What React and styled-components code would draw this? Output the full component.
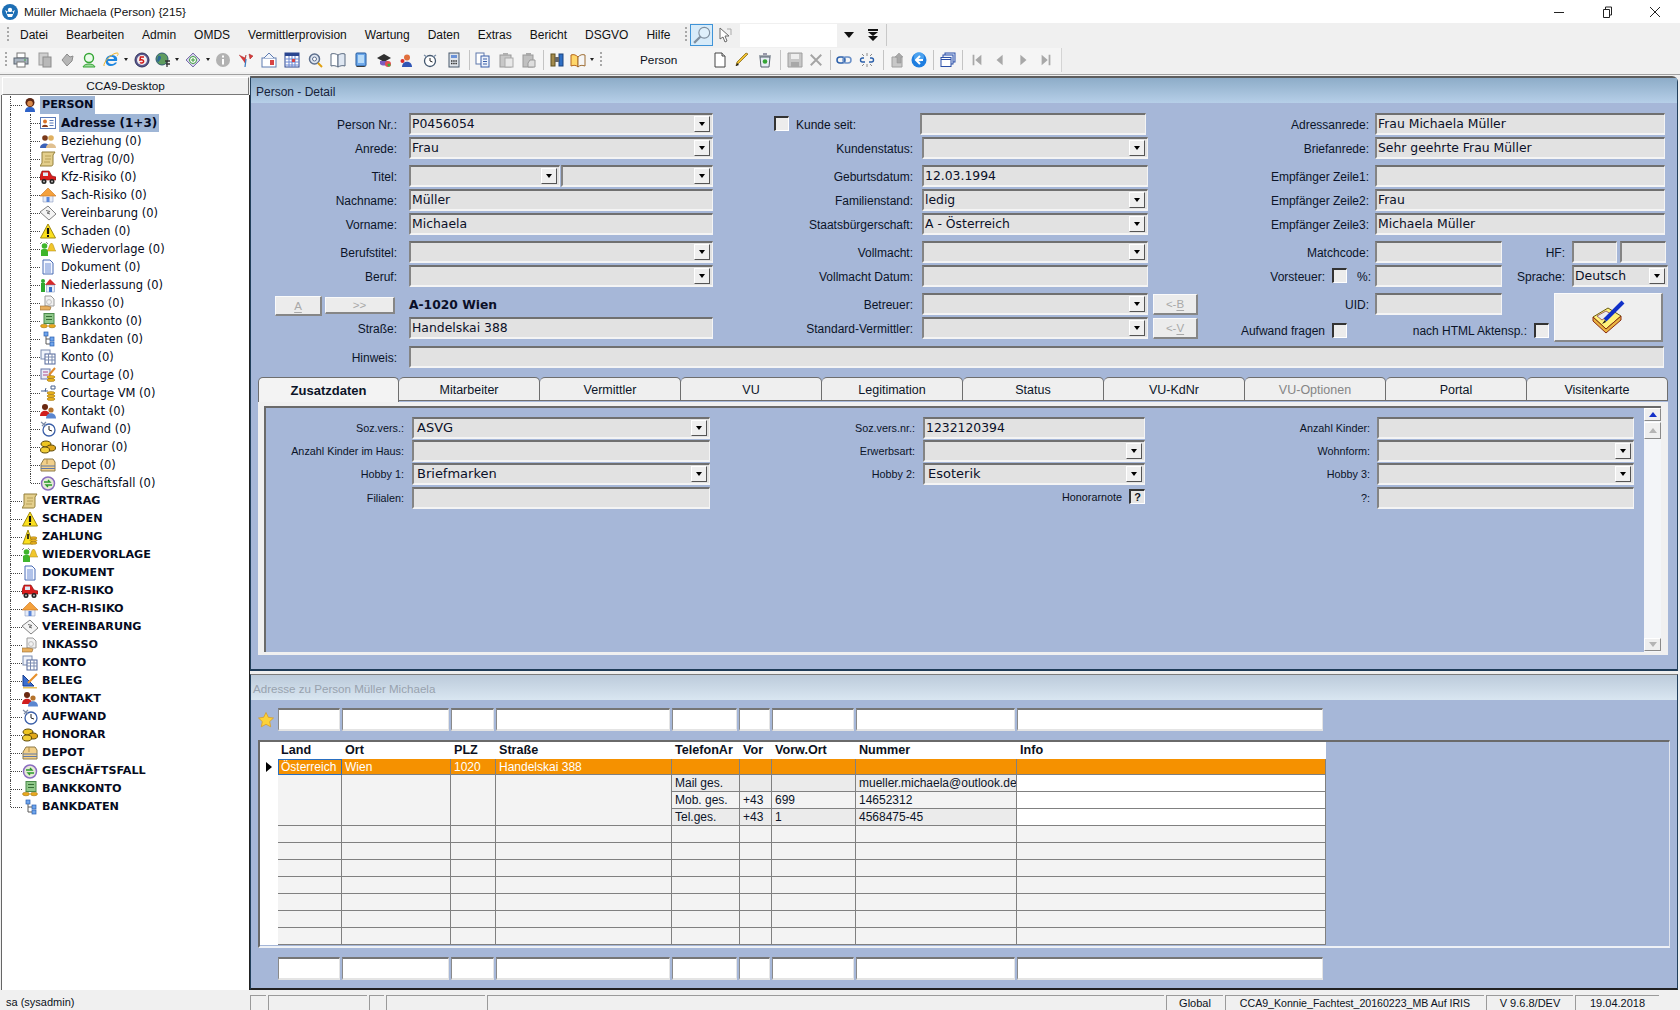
import React from "react";
import styled, { createGlobalStyle } from "styled-components";

const Global = createGlobalStyle`
  html, body { margin: 0; padding: 0; background: #fff; overflow: hidden; }
  body { font-family: "Liberation Sans", Arial, sans-serif; font-size: 12px; color: #0b1020; }
  * { box-sizing: border-box; }
`;

const Shell = styled.div`width:1680px;height:1010px;display:flex;flex-direction:column;background:#f0f0f0;overflow:hidden;`;

/* ---------- icons ---------- */
const P = {
  person: <><path d="M3 15c0-4 2-5 5-5s5 1 5 5z" fill="#2d62c8"/><circle cx="8" cy="5.500" r="4.500" fill="#5a2412"/><circle cx="8" cy="6.500" r="2.800" fill="#d98a4a"/></>,
  card: <><rect x=".5" y="2.500" width="15" height="11" fill="#fff" stroke="#5a7ab8"/><circle cx="5" cy="6.500" r="2" fill="#d9722a"/><path d="M2 12c0-3 6-3 6 0z" fill="#8a3a1a"/><path d="M9.500 5.500h4M9.500 8h4M9.500 10.500h4" stroke="#5a7ab8"/></>,
  rel: <><circle cx="5" cy="5" r="2.800" fill="#7a3a1a"/><path d="M0 15c0-6 10-6 10 0z" fill="#3a62b8"/><circle cx="11" cy="5" r="2.800" fill="#e0b060"/><path d="M6 15c0-6 10-6 10 0z" fill="#e0c090"/></>,
  scroll: <><path d="M2 1h13l-2 3v9c0 1.500-1 2-2 2H0l2-3V4z" fill="#e4cf8c" stroke="#94803c"/><path d="M5 5h6M5 8h6M4 11h6" stroke="#b8a058"/></>,
  car: <><path d="M0 11V7l2-5h7l3 5 4 1v3z" fill="#d81e1e" stroke="#801010" strokeWidth=".6"/><rect x="3" y="3.500" width="5" height="3.500" fill="#dfe8f4"/><circle cx="4" cy="12.500" r="2.500" fill="#222"/><circle cx="12" cy="12.500" r="2.500" fill="#222"/><circle cx="4" cy="12.500" r="1" fill="#bbb"/><circle cx="12" cy="12.500" r="1" fill="#bbb"/></>,
  house: <><path d="M3 8h10v7H3z" fill="#e6ecf8" stroke="#8a9cc0" strokeWidth=".6"/><path d="M0 9 8 1l8 8z" fill="#f4a13c" stroke="#c8701c" strokeWidth=".6"/><rect x="6.500" y="10" width="3" height="5" fill="#5a86d8"/></>,
  deal: <><path d="M0 7 8 1l8 8-7 6z" fill="#f4f4f4" stroke="#808080"/><path d="M6 5.500l4 1-3 1.500 3 1" stroke="#707070" fill="none"/></>,
  warn: <><path d="M8 1 .5 15h15z" fill="#fbe01e" stroke="#a08a10"/><path d="M8 5v6" stroke="#111" strokeWidth="2.200"/><rect x="7" y="12" width="2" height="2" fill="#111"/></>,
  remind: <><circle cx="4.500" cy="5" r="2.800" fill="#3fb52c"/><path d="M1 15V9c0-1.500 7-1.500 7 0v6z" fill="#3fb52c"/><path d="M7 10c2-1 2-7 4.500-8 2.500 1 2.500 7 4.500 8z" fill="#f1c62c" stroke="#a88510" strokeWidth=".5"/><path d="M0 3l2-2M8 3 6 1" stroke="#888"/></>,
  doc: <><path d="M3 1h7l3 3v11H3z" fill="#f4f7ff" stroke="#4a6cb4"/><path d="M5 5h6M5 7h6M5 9h6M5 11h6M5 13h6" stroke="#6f8ed4"/></>,
  branch: <><rect x="1" y="6" width="4" height="9" fill="#2fa82f"/><circle cx="3" cy="4" r="2" fill="#2fa82f"/><path d="M5 8l5-6 6 6z" fill="#d62a2a"/><rect x="6.500" y="8" width="8" height="7" fill="#e8eef8" stroke="#6d86b8" strokeWidth=".5"/><rect x="9" y="10" width="3" height="5" fill="#3a6fc8"/></>,
  cash: <><path d="M5 1h6l3 3v7H5z" fill="#f2f2f2" stroke="#9a9a9a"/><circle cx="9" cy="7" r="2.400" fill="none" stroke="#c0c0c0"/><path d="M0 11h7l4 1-1 3H0z" fill="#e8b060" stroke="#96682c" strokeWidth=".6"/></>,
  bank: <><rect x="4" y="0.500" width="10" height="10" fill="#8fc88a" stroke="#4a8a4a"/><path d="M6 3.500h6M6 6.500h6" stroke="#356f35"/><ellipse cx="4" cy="13" rx="3.500" ry="1.800" fill="#e8a81e" stroke="#946808" strokeWidth=".5"/><ellipse cx="12" cy="13" rx="3.500" ry="1.800" fill="#e8a81e" stroke="#946808" strokeWidth=".5"/></>,
  tree: <><rect x="4" y="1" width="4" height="4" fill="#6ea4ec" stroke="#2a5fb0" strokeWidth=".7"/><rect x="10" y="6" width="4" height="4" fill="#6ea4ec" stroke="#2a5fb0" strokeWidth=".7"/><rect x="10" y="11" width="4" height="4" fill="#6ea4ec" stroke="#2a5fb0" strokeWidth=".7"/><path d="M6 5v8h4M6 8h4" stroke="#5a5a5a" fill="none"/></>,
  konto: <><rect x="1" y="1" width="9" height="9" fill="#eef2fa" stroke="#7b8bb0"/><rect x="5" y="5" width="10" height="10" fill="#fff" stroke="#52669a"/><path d="M5 8h10M5 11h10M8.500 5v10M12 5v10" stroke="#7b8bb0"/></>,
  court: <><rect x="1" y="2" width="9" height="10" fill="#e9edf8" stroke="#6677a8"/><path d="M3 5h5M3 8h5" stroke="#b04a8a"/><path d="M15 1 9 8" stroke="#e08a2c" strokeWidth="2"/><ellipse cx="11" cy="10" rx="4" ry="1.500" fill="#e8b21e" stroke="#946808" strokeWidth=".5"/><ellipse cx="11" cy="13" rx="4" ry="1.500" fill="#e8b21e" stroke="#946808" strokeWidth=".5"/></>,
  courtvm: <><path d="M1 6h5M6 3l-1 3h3M11 1h4v3h-4z" stroke="#46608f" fill="none"/><ellipse cx="11" cy="8" rx="4" ry="1.500" fill="#e8b21e" stroke="#946808" strokeWidth=".5"/><ellipse cx="11" cy="11" rx="4" ry="1.500" fill="#e8b21e" stroke="#946808" strokeWidth=".5"/><ellipse cx="11" cy="14" rx="4" ry="1.500" fill="#e8b21e" stroke="#946808" strokeWidth=".5"/></>,
  contact: <><circle cx="5" cy="4" r="3" fill="#6a2810"/><path d="M0 13c0-7 10-7 10 0z" fill="#d01e1e"/><circle cx="11" cy="7" r="2.600" fill="#b5732c"/><path d="M6 15.500c0-7 10-7 10 0z" fill="#5a86d0"/></>,
  clock: <><circle cx="9" cy="9" r="6" fill="#fff" stroke="#3a5fa8" strokeWidth="1.300"/><path d="M9 5v4l3 1" stroke="#222" fill="none"/><path d="M1 1l5 4M6 1 2 5" stroke="#7d8ca8" strokeWidth="1.200"/></>,
  coins: <><ellipse cx="6" cy="5" rx="5" ry="3" fill="#eec51f" stroke="#5e4a08"/><ellipse cx="11" cy="9" rx="4.500" ry="3" fill="#e2a81a" stroke="#5e4a08"/><ellipse cx="5" cy="11" rx="4.500" ry="3" fill="#f2cf38" stroke="#5e4a08"/></>,
  depot: <><path d="M1 7l3-5h9l2 3v9H1z" fill="#f2d08a" stroke="#8d7a48"/><path d="M1 9h14M1 11.500h14" stroke="#5f78a8"/><path d="M7 2v5" stroke="#b08c48"/></>,
  case: <><circle cx="8" cy="8.500" r="6.500" fill="#e5e9d8" stroke="#8a6cc0" strokeWidth="1.500"/><path d="M4 7h6l-2-2M12 10H6l2 2" stroke="#2a9a2a" fill="none" strokeWidth="1.300"/></>,
  pay: <><path d="M6 1 .8 15h10z" fill="#fbe01e" stroke="#a08a10"/><path d="M6 5v5" stroke="#111" strokeWidth="1.600"/><ellipse cx="11.500" cy="9" rx="3.500" ry="1.300" fill="#e8b21e" stroke="#946808" strokeWidth=".5"/><ellipse cx="11.500" cy="11.500" rx="3.500" ry="1.300" fill="#e8b21e" stroke="#946808" strokeWidth=".5"/><ellipse cx="11.500" cy="14" rx="3.500" ry="1.300" fill="#e8b21e" stroke="#946808" strokeWidth=".5"/></>,
  beleg: <><path d="M1 2v11h11z" fill="#3b6fd0" stroke="#143c90"/><path d="M1 14h14v1.500H1z" fill="#e8c45c"/><path d="M15 1 6 10" stroke="#e8902c" strokeWidth="2.200"/></>,
  printer: <><rect x="4" y="1" width="8" height="5" fill="#fff" stroke="#777"/><rect x="1" y="6" width="14" height="6" fill="#a9b4c0" stroke="#59636e"/><rect x="4" y="10" width="8" height="5" fill="#fff" stroke="#777"/><path d="M11 8h2" stroke="#3aa33a"/></>,
  gdoc: <><rect x="2" y="1" width="9" height="12" fill="#cfcfcf" stroke="#9c9c9c"/><rect x="6" y="5" width="8" height="10" fill="#b8b8b8" stroke="#8c8c8c"/></>,
  gdocs: <><path d="M2 8l5-6 3 3 3-1-1 5-5 5z" fill="#b6b6b6" stroke="#8c8c8c"/></>,
  gmag: <><circle cx="8" cy="6" r="4.500" fill="#e9fbe9" stroke="#35a535" strokeWidth="1.400"/><path d="M2 15c1-4 11-4 12 0z" fill="#9edc9e" stroke="#35a535"/></>,
  ie: <><path d="M14 9H5c0 3.500 5 4 7 1.500h2C12 15 3 16 2.500 9c0-6 8-8 11-4 .8 1.300.8 2.500.5 4zM5 7h6c0-3-5.500-3-6 0z" fill="#1f86df"/><path d="M1 14C0 10 9 1 14 1c2 0 1 2 0 3" fill="none" stroke="#f0b429"/></>,
  five: <><circle cx="8" cy="8" r="7" fill="#5a5a90" stroke="#30305a"/><circle cx="8" cy="8" r="5" fill="#f5f0f0"/><path d="M10 5H6.500L6 8c3-1 4 1 3.500 2s-2.500 1.500-3.500.5" fill="none" stroke="#d01818" strokeWidth="1.500"/></>,
  globe: <><circle cx="7" cy="7" r="6" fill="#5f9c5f" stroke="#305a70"/><path d="M3 4c3-1 4 2 2 4s-1 3-3 1" fill="#2c6a96"/><path d="M10 9h5M11 12h4M12 9v6" stroke="#333" strokeWidth="1.300"/></>,
  cycle: <><path d="M8 1l7 7-7 7-7-7z" fill="#d6d2ea" stroke="#7a70ac"/><circle cx="8" cy="8" r="3.500" fill="#fff" stroke="#3a9a3a"/><path d="M6 8h4M8 6v4" stroke="#3a9a3a"/></>,
  info: <><circle cx="8" cy="8" r="7" fill="#b2b2b2"/><rect x="7" y="3.500" width="2" height="2" fill="#fff"/><rect x="7" y="7" width="2" height="5.500" fill="#fff"/></>,
  flag: <><path d="M1 3l6 3 1-3-1 8M11 2l4 2-3 3z" fill="#d83a3a" stroke="#a02020" strokeWidth=".5"/><path d="M8 7l-1 8" stroke="#3a7ac0" strokeWidth="1.300"/></>,
  cardup: <><rect x="1" y="6" width="14" height="9" fill="#fff" stroke="#5e7cb2"/><path d="M3 6l5-5 5 5" fill="#f0f4fb" stroke="#5e7cb2"/><rect x="9" y="8" width="4" height="5" fill="#d84444"/></>,
  cal: <><rect x="1" y="1" width="14" height="14" fill="#fff" stroke="#2a4690"/><rect x="1" y="1" width="14" height="3" fill="#2a4690"/><path d="M1 7h14M1 10h14M1 13h14M5 4v11M8 4v11M11 4v11" stroke="#6a86d0"/><rect x="8" y="7" width="3" height="3" fill="#d84444"/></>,
  gear: <><circle cx="7.500" cy="7" r="5" fill="#dfe6f1" stroke="#5d6f8d" strokeWidth="1.500"/><circle cx="7.500" cy="7" r="2" fill="#fff" stroke="#5d6f8d"/><path d="M11 11l4 4" stroke="#e0a010" strokeWidth="2"/></>,
  bookg: <><path d="M1 2c3-1 5 0 7 1v12c-2-1-4-2-7-1z" fill="#fff" stroke="#5a6a80"/><path d="M8 3c2-1 4-2 7-1v12c-3-1-5 0-7 1z" fill="#dfe7f2" stroke="#5a6a80"/></>,
  tablet: <><rect x="3" y="1" width="10" height="13" rx="1" fill="#6da8ea" stroke="#245a9e"/><rect x="5" y="3" width="6" height="8" fill="#b8dbf8"/><path d="M3 14h8l2 1H4z" fill="#3a3a3a"/></>,
  hat: <><path d="M1 6l7-4 7 4-7 4z" fill="#303030"/><path d="M4 9v3c2 2 6 2 8 0V9" fill="#7a5cc0"/><circle cx="12" cy="12" r="3" fill="#e34f4f"/><circle cx="13" cy="13" r="1.600" fill="#3bb03b"/></>,
  phones: <><circle cx="8" cy="5.500" r="3" fill="#e06e3c"/><path d="M3 15c0-7 10-7 10 0z" fill="#2f55b5"/><circle cx="3.500" cy="9" r="2" fill="#d92c2c"/></>,
  alarm: <><circle cx="8" cy="9" r="5.500" fill="#fff" stroke="#44586f" strokeWidth="1.300"/><path d="M8 6v3l2.500 1" stroke="#222" fill="none"/><path d="M2 3l3 2M14 3l-3 2" stroke="#7a8ea6" strokeWidth="1.300"/></>,
  calc: <><rect x="3" y="1" width="10" height="14" fill="#dfe4ea" stroke="#4a5a6d"/><rect x="5" y="3" width="6" height="3" fill="#6a92d8"/><path d="M5 9h6M5 11.500h6" stroke="#333" strokeWidth="1.300" strokeDasharray="1.500 .7"/></>,
  copy: <><rect x="1" y="1" width="8" height="11" fill="#fff" stroke="#5f78ac"/><rect x="6" y="4" width="8" height="11" fill="#eef3fb" stroke="#3a5fa8"/><path d="M8 7h4M8 9.500h4M8 12h4" stroke="#3a5fa8"/></>,
  paste: <><rect x="2" y="3" width="11" height="12" fill="#c8c8c8" stroke="#9a9a9a"/><rect x="5" y="1" width="5" height="3" fill="#b0b0b0"/><rect x="7" y="6" width="8" height="9" fill="#e8e8e8" stroke="#aaa"/></>,
  paste2: <><rect x="2" y="3" width="10" height="12" fill="#c0c0c0" stroke="#999"/><rect x="5" y="1" width="5" height="3" fill="#aaa"/><path d="M9 8h5v7H7v-4z" fill="#dedede" stroke="#999"/></>,
  binoc: <><rect x="2" y="2" width="4" height="12" fill="#a38a4c" stroke="#5e5020"/><rect x="10" y="2" width="4" height="12" fill="#2f6fc4" stroke="#1d4480"/><rect x="6" y="5" width="4" height="5" fill="#666"/></>,
  openbook: <><path d="M1 3c3-1 5 0 7 2v10c-2-2-4-2-7-1z" fill="#ffd76a" stroke="#b5651d"/><path d="M8 5c2-2 4-3 7-2v11c-3-1-5-1-7 1z" fill="#f5f5f5" stroke="#9c6b30"/></>,
  page: <><path d="M3 1h7l3 3v11H3z" fill="#fff" stroke="#444"/><path d="M10 1v3h3" fill="#ddd" stroke="#444"/></>,
  pencil: <><path d="M14 2l-9 9-3 3 1-4 9-9z" fill="#f0c030" stroke="#8a6d1a" strokeWidth=".8"/><path d="M2 14l1-3 2 2z" fill="#111"/></>,
  bin: <><path d="M3 5h10l-1 10H4z" fill="#e8eef5" stroke="#55606e"/><path d="M2 4h12" stroke="#55606e"/><circle cx="8" cy="9.500" r="2.300" fill="#35a535"/><path d="M6 1h4v2H6z" fill="#99a"/></>,
  save: <><path d="M1 1h14v14H1z" fill="#c7c7c7" stroke="#9e9e9e"/><rect x="4" y="2" width="8" height="5" fill="#eee"/><rect x="4" y="10" width="8" height="5" fill="#a8a8a8"/></>,
  xg: <path d="M2 2l12 12M14 2 2 14" stroke="#a4a4a4" strokeWidth="2.200"/>,
  link: <><rect x="1" y="5" width="8" height="6" rx="3" fill="none" stroke="#2a5faa" strokeWidth="1.500"/><rect x="7" y="5" width="8" height="6" rx="3" fill="none" stroke="#6a90c8" strokeWidth="1.500"/></>,
  unlink: <><path d="M5 6H3.500a2 2 0 0 0 0 4H6M11 6h1.500a2 2 0 0 1 0 4H10" fill="none" stroke="#2a5faa" strokeWidth="1.400"/><path d="M8 1v3M8 12v3M3 2l2 2M13 2l-2 2M3 14l2-2M13 14l-2-2" stroke="#8a8a8a"/></>,
  updoc: <><path d="M2 5h10v10H2z" fill="#c8c8c8" stroke="#a0a0a0"/><path d="M9 1l4 4h-2v6H7V5H5z" fill="#a8a8a8" stroke="#909090" strokeWidth=".5"/></>,
  back: <><circle cx="8" cy="8" r="7.500" fill="#1f7ee0"/><circle cx="8" cy="5" r="5" fill="#5fb2f5" opacity=".7"/><path d="M9 4 5 8l4 4M5 8h7" stroke="#fff" strokeWidth="2" fill="none"/></>,
  windows: <><rect x="5" y="1" width="10" height="9" fill="#dfe8f8" stroke="#2a4fa8"/><rect x="3" y="3" width="10" height="9" fill="#eef3fb" stroke="#2a4fa8"/><rect x="1" y="5.500" width="10" height="9" fill="#fff" stroke="#2a4fa8"/><path d="M1 7.500h10" stroke="#2a4fa8"/></>,
  first: <path d="M3 2h2v12H3zM13 2v12L6 8z" fill="#a8a8a8"/>,
  prev: <path d="M11 2v12L4 8z" fill="#a8a8a8"/>,
  next: <path d="M5 2v12l7-6z" fill="#a8a8a8"/>,
  last: <path d="M3 2v12l7-6zM11 2h2v12h-2z" fill="#a8a8a8"/>,
  star: <path d="M8 .5l2.300 4.800 5.200.7-3.800 3.600 1 5.200L8 12.300l-4.700 2.500 1-5.200L.5 6l5.200-.7z" fill="#fcd23a" stroke="#d99a1c" strokeWidth=".7"/>,
  appicon: <><circle cx="8" cy="8" r="8" fill="#1d6fb5"/><circle cx="8" cy="6" r="2.200" fill="#fff"/><path d="M3 6l5 3 5-3-3 7H6z" fill="#fff"/><path d="M5 8h6v2H5z" fill="#1d6fb5"/></>,
  glass: <><circle cx="10" cy="6" r="4.800" fill="#dff0fb" stroke="#7f8f9f"/><path d="M6.500 9.500 1 15" stroke="#7f8f9f" strokeWidth="2"/></>,
  cursor: <><path d="M3 1v11l3-2 2 5 2-1-2-5h4z" fill="#fff" stroke="#6a6a6a"/><path d="M10 2h4v6" stroke="#aaa" fill="none"/></>,
};

const IconSvg = styled.svg`display:block;flex:none;width:${p => p.$s}px;height:${p => p.$s}px;`;
const Ic = ({ n, s = 16 }) => <IconSvg $s={s} viewBox="0 0 16 16">{P[n]}</IconSvg>;

/* ---------- title bar ---------- */
const TitleBar = styled.div`height:23px;background:#fff;display:flex;align-items:center;padding-left:2px;flex:none;`;
const TitleText = styled.span`margin-left:6px;font-size:11.800px;color:#111;`;
const WinControls = styled.div`margin-left:auto;display:flex;padding-right:1px;`;
const WinButton = styled.div`width:48px;height:23px;display:flex;align-items:center;justify-content:center;`;
const WinGlyph = styled.svg`width:12px;height:12px;fill:none;stroke:#222;stroke-width:1;`;

/* ---------- menu ---------- */
const MenuBar = styled.div`height:24px;flex:none;display:flex;align-items:center;background:#f0f0f0;`;
const Grip = styled.div`width:2px;height:16px;margin:0 ${p => p.$r ?? 4}px 0 ${p => p.$l ?? 7}px;flex:none;background:repeating-linear-gradient(to bottom,#a8a8a8 0 2px,transparent 2px 4px);`;
const MenuList = styled.div`display:flex;gap:18px;margin-left:7px;`;
const MenuItem = styled.span`font-size:12px;color:#111;`;
const ViewBtn = styled.div`width:23px;height:22px;display:flex;align-items:center;justify-content:center;flex:none;background:${p => (p.$on ? "#d7ebf9" : "transparent")};border:1px solid ${p => (p.$on ? "#3f94d8" : "transparent")};`;
const SearchBox = styled.div`width:97px;height:23px;background:#fff;margin-left:4px;flex:none;`;
const MenuArrow = styled.span`width:10px;height:0;flex:none;margin-left:${p => p.$l}px;border-left:5px solid transparent;border-right:5px solid transparent;border-top:6px solid #111;`;
const DoubleArrow = styled.svg`width:12px;height:12px;margin-left:13px;flex:none;fill:#111;`;
const BandEnd = styled.div`width:1px;height:22px;background:#c8c8c8;margin-left:7px;flex:none;`;

/* ---------- toolbar ---------- */
const ToolBar = styled.div`height:28px;flex:none;display:flex;align-items:center;background:#f0f0f0;padding-bottom:2px;border-bottom:1px solid #a0a0a0;`;
const ToolStrip = styled.div`display:flex;align-items:center;height:24px;width:1062px;background:#f5f5f5;border-right:1px solid #d4d4d4;`;
const Tool = styled.div`height:24px;width:${p => p.$w}px;flex:none;display:flex;align-items:center;justify-content:center;`;
const Caret = styled.span`width:${p => p.$w || 8}px;display:flex;justify-content:center;flex:none;&::after{content:"";border-left:2.500px solid transparent;border-right:2.500px solid transparent;border-top:3px solid #222;}`;
const ToolSep = styled.div`width:${p => p.$w}px;flex:none;height:20px;display:flex;justify-content:center;&::after{content:"";width:1px;height:20px;background:#c4c4c4;}`;
const ToolLabel = styled.span`width:${p => p.$w}px;flex:none;font-size:11.800px;padding-left:32px;`;

const toolSeq = [
  ["printer", 23], ["gdoc", 26], ["gdocs", 19], ["gmag", 23], ["ie", 22, 8], ["five", 24], ["globe", 18, 10], ["cycle", 22, 8],
  ["info", 21], ["flag", 25], ["cardup", 22], ["cal", 23], ["gear", 23], ["bookg", 23], ["tablet", 23], ["hat", 23], ["phones", 23], ["alarm", 23], ["calc", 25],
  ["|", 6], ["copy", 21], ["paste", 25], ["paste2", 22], ["|", 7], ["binoc", 20], ["openbook", 22, 6],
];
const toolSeq2 = [
  ["page", 20], ["pencil", 23], ["bin", 23], ["|", 9], ["save", 20], ["xg", 22], ["|", 6], ["link", 22], ["unlink", 24], ["|", 8], ["updoc", 21], ["back", 22], ["|", 7],
  ["windows", 22], ["|", 7], ["first", 22], ["prev", 23], ["next", 23], ["last", 23],
];
const renderTools = seq => seq.map(([n, w, c], i) => n === "|" ? <ToolSep key={i} $w={w} /> : (
  <React.Fragment key={i}><Tool $w={w}><Ic n={n} s={n === "xg" || n === "first" || n === "prev" || n === "next" || n === "last" ? 14 : 16} /></Tool>{c ? <Caret $w={c} /> : null}</React.Fragment>
));

/* ---------- workspace ---------- */
const Workspace = styled.div`flex:1;display:flex;min-height:0;`;
const Sidebar = styled.aside`width:250px;flex:none;display:flex;flex-direction:column;padding-top:2px;padding-left:1px;`;
const SideHead = styled.div`height:18px;flex:none;margin-right:1px;margin-left:1px;background:#f0f0f0;border:1px solid #fff;border-right-color:#777;border-bottom-color:#777;text-align:center;line-height:16px;font-size:11.800px;`;
const TreePane = styled.div`flex:1;background:#fff;border-left:1px solid #666;border-right:1px solid #222;padding:1px 0 0 8px;`;
const TreeRow = styled.div`height:18px;display:flex;align-items:flex-start;`;
const Connector = styled.span`flex:none;width:${p => p.$w}px;height:${p => (p.$last ? 9 : 18)}px;border-left:1px dotted #444;&::after{content:"";display:block;height:9px;border-bottom:1px dotted #444;}`;
const TreeIcon = styled.span`flex:none;width:18px;height:18px;display:flex;align-items:center;justify-content:flex-start;margin-right:${p => p.$r}px;`;
const TreeText = styled.span`height:18px;line-height:18px;padding:0 2px;font-family:"DejaVu Sans",Verdana,sans-serif;white-space:nowrap;
  font-size:${p => (p.$bold ? (p.$caps ? "11.200px" : "12px") : "11.500px")};
  font-weight:${p => (p.$bold ? 700 : 400)};
  background:${p => (p.$sel ? "#9fb6d6" : "transparent")};color:#050a20;`;
const ChildList = styled.div`border-left:1px dotted #444;padding-left:19px;`;

const children = [
  ["card", "Adresse (1+3)", 1], ["rel", "Beziehung (0)"], ["scroll", "Vertrag (0/0)"], ["car", "Kfz-Risiko (0)"], ["house", "Sach-Risiko (0)"], ["deal", "Vereinbarung (0)"],
  ["warn", "Schaden (0)"], ["remind", "Wiedervorlage (0)"], ["doc", "Dokument (0)"], ["branch", "Niederlassung (0)"], ["cash", "Inkasso (0)"], ["bank", "Bankkonto (0)"], ["tree", "Bankdaten (0)"],
  ["konto", "Konto (0)"], ["court", "Courtage (0)"], ["courtvm", "Courtage VM (0)"], ["contact", "Kontakt (0)"], ["clock", "Aufwand (0)"], ["coins", "Honorar (0)"], ["depot", "Depot (0)"], ["case", "Geschäftsfall (0)"],
];
const roots = [
  ["scroll", "VERTRAG"], ["warn", "SCHADEN"], ["pay", "ZAHLUNG"], ["remind", "WIEDERVORLAGE"], ["doc", "DOKUMENT"], ["car", "KFZ-RISIKO"], ["house", "SACH-RISIKO"], ["deal", "VEREINBARUNG"], ["cash", "INKASSO"],
  ["konto", "KONTO"], ["beleg", "BELEG"], ["contact", "KONTAKT"], ["clock", "AUFWAND"], ["coins", "HONORAR"], ["depot", "DEPOT"], ["case", "GESCHÄFTSFALL"], ["bank", "BANKKONTO"], ["tree", "BANKDATEN"],
];

/* ---------- panels ---------- */
const Content = styled.main`flex:1;display:flex;flex-direction:column;min-width:0;padding-right:2px;background:#efefef;`;
const DetailPanel = styled.section`height:595px;flex:none;margin-top:1px;background:#a6b7d8;border:1px solid #22405c;border-top:2px solid #5c5c5c;border-bottom:2px solid #1f3c58;border-top-right-radius:6px;display:flex;flex-direction:column;`;
const PanelHead = styled.div`height:25px;flex:none;padding:${p => (p.$muted ? "2px 0 0 2px" : "2px 0 0 5px")};display:flex;align-items:center;font-size:${p => (p.$muted ? 11.6 : 12)}px;color:${p => (p.$muted ? "#98a2ae" : "#16233a")};
  background:linear-gradient(to bottom,${p => (p.$muted ? "#bccbdb,#d9e6f1" : "#8dacc8,#b6cfe8")});`;

const FormGrid = styled.div`display:grid;grid-template-columns:462px 485px 470px;margin-top:10px;`;
const FormColumn = styled.div`display:grid;grid-template-rows:24px 28px 24px 24px 28px 24px 28px 24px 29px;`;
const FormRow = styled.div`display:flex;align-items:flex-start;height:22px;`;
const Label = styled.label`flex:none;width:${p => p.$w}px;margin-right:${p => p.$gap ?? 0}px;text-align:right;line-height:${p => p.$lh || 24}px;font-size:${p => p.$size || 12}px;white-space:nowrap;color:#0b1428;`;
const Field = styled.div`flex:none;width:${p => p.$w}px;height:${p => p.$h || 22}px;margin-left:${p => p.$l || 0}px;background:#e2e2e2;display:flex;align-items:center;justify-content:space-between;
  border-top:2px solid #707070;border-left:2px solid #848484;border-right:1px solid #f4f4f4;border-bottom:2px solid #f4f4f4;
  font-family:"DejaVu Sans",Verdana,sans-serif;font-size:${p => p.$size || 12.4}px;padding:0 2px 1px ${p => p.$pad || 1}px;white-space:nowrap;color:#0b1028;`;
const Drop = styled.span`flex:none;width:16px;height:16px;background:#efefef;border:1px solid #fff;border-right-color:#555;border-bottom-color:#555;display:flex;align-items:center;justify-content:center;
  &::after{content:"";border-left:3.500px solid transparent;border-right:3.500px solid transparent;border-top:4px solid #000;}`;
const Spacer = styled.span`width:${p => p.$w}px;flex:none;`;
const Check = styled.span`flex:none;width:15px;height:15px;margin:${p => p.$m || "3px 0 0 7px"};background:#ececec;border:1px solid #fff;border-top:2px solid #333;border-left:2px solid #333;`;
const Raised = styled.button`flex:none;width:${p => p.$w}px;height:${p => p.$h}px;margin:${p => p.$m || 0};padding:0;background:#ececec;border:1px solid #fafafa;border-right:2px solid #868686;border-bottom:2px solid #868686;
  color:#a8a8a8;font-family:"Liberation Sans",sans-serif;font-size:11.500px;display:flex;align-items:center;justify-content:center;`;
const AccessKey = styled.u`text-underline-offset:2px;`;
const CityText = styled.strong`margin-left:14px;font-family:"DejaVu Sans",Verdana,sans-serif;font-size:12.300px;line-height:24px;color:#0b1028;`;
const CheckCaption = styled.span`flex:none;width:${p => p.$w}px;margin-left:7px;font-size:12px;line-height:24px;white-space:nowrap;`;
const SplitRows = styled.div`grid-row:span 2;display:flex;align-items:flex-start;`;
const SplitStack = styled.div`display:flex;flex-direction:column;gap:2px;width:356px;flex:none;`;
const BookBtn = styled(Raised)`background:#efefef;`;
const HintRow = styled.div`display:flex;height:22px;flex:none;`;

/* ---------- tabs ---------- */
const TabBar = styled.div`display:flex;height:25px;flex:none;margin:9px 0 0 7px;`;
const Tab = styled.div`width:141px;flex:none;padding-top:1px;height:${p => (p.$active ? 25 : 24)}px;display:flex;align-items:center;justify-content:center;background:${p => (p.$active ? "#f3f3f3" : "#efefef")};
  border:1px solid #6e6e6e;border-left:${p => (p.$active ? "1px solid #6e6e6e" : "0")};border-bottom:${p => (p.$active ? "0" : "1px solid #6e6e6e")};border-radius:5px 5px 0 0;
  font-size:${p => (p.$active ? 13 : 12.5)}px;font-weight:${p => (p.$active ? 700 : 400)};color:${p => (p.$off ? "#858585" : "#0b1428")};`;
const TabFrame = styled.div`margin-left:7px;width:1410px;height:253px;flex:none;background:#f0f0f0;padding:4px 7px 3px 6px;display:flex;`;
const TabInner = styled.div`flex:1;display:flex;background:#a6b7d8;border-top:2px solid #6a6a6a;border-left:2px solid #6a6a6a;`;
const TabGrid = styled.div`flex:1;padding-top:9px;display:grid;grid-template-columns:444px 435px 489px;grid-auto-rows:min-content;`;
const TabColumn = styled.div`display:grid;grid-template-rows:23px 23px 24px 22px;`;
const HonorarRow = styled.div`display:flex;justify-content:flex-end;align-items:center;height:19px;font-size:10.800px;`;
const HelpCheck = styled.span`flex:none;width:16px;height:15px;margin-left:7px;background:#e6e6e6;border-top:2px solid #333;border-left:2px solid #333;border-right:1px solid #fff;border-bottom:1px solid #fff;font:700 11px/13px "Liberation Sans",sans-serif;text-align:center;`;
const Scrollbar = styled.div`width:17px;flex:none;display:flex;flex-direction:column;background:#f3f5f8;`;
const ScrollBtn = styled.div`height:${p => p.$h}px;flex:none;background:#efefef;border:1px solid #fff;border-right-color:#8a8a8a;border-bottom-color:#8a8a8a;margin-bottom:${p => p.$mb || 0}px;margin-top:${p => p.$mt || "0"};display:flex;align-items:center;justify-content:center;
  &::after{content:"";border-left:4px solid transparent;border-right:4px solid transparent;
  ${p => (p.$down ? "border-top:5px solid #b4b4b4;" : `border-bottom:5px solid ${p.$blue ? "#1430c8" : "#b4b4b4"};`)}}`;

/* ---------- lower panel ---------- */
const LowerPanel = styled.section`flex:1;margin-top:3px;background:#a6b7d8;border-top:1px solid #7c7c7c;border-left:1px solid #22405c;border-right:1px solid #22405c;border-bottom:2px solid #222;display:flex;flex-direction:column;min-height:0;`;
const FilterRow = styled.div`display:flex;align-items:center;flex:none;height:23px;padding-left:7px;margin-top:${p => p.$t}px;`;
const StarSlot = styled.span`width:20px;flex:none;`;
const FilterCells = styled.div`display:flex;gap:2px;`;
const FilterCell = styled.div`width:${p => p.$w}px;height:23px;flex:none;background:#fff;border-top:2px solid #767676;border-left:1px solid #8a8a8a;border-bottom:2px solid #e4e4e4;border-right:1px solid #e4e4e4;`;
const GridFrame = styled.div`flex:none;height:208px;width:1412px;margin:9px 0 0 7px;border-top:2px solid #6a6a6a;border-left:2px solid #6a6a6a;border-bottom:2px solid #eef1f6;border-right:1px solid #e2e6ee;display:flex;flex-direction:column;`;
const cols = "18px 64px 109px 45px 176px 68px 32px 84px 161px 309px";
const DataRow = styled.div`display:grid;grid-template-columns:${cols};height:${p => p.$h || 17}px;flex:none;width:1066px;background:${p => p.$bg || "#f3f3f3"};`;
const HeadCell = styled.div`background:#fff;font-weight:700;font-size:12.600px;line-height:17px;padding-left:3px;white-space:nowrap;overflow:hidden;`;
const Gutter = styled.div`background:#fff;display:flex;align-items:center;justify-content:center;&::after{content:${p => (p.$mark ? '""' : "none")};border-top:5px solid transparent;border-bottom:5px solid transparent;border-left:6px solid #000;}`;
const Cell = styled.div`border-right:1px solid #808080;border-bottom:1px solid #808080;padding-left:3px;font-size:12px;line-height:16px;overflow:hidden;white-space:nowrap;color:${p => p.$c || "#0b1428"};background:${p => p.$bg || "transparent"};
  ${p => p.$focus && "outline:1px solid #2a6fc0;outline-offset:-1px;"}`;
const DetailBlock = styled.div`display:grid;grid-template-columns:${cols};grid-template-rows:17px 17px 17px;width:1066px;flex:none;background:#f3f3f3;`;
const SpanGutter = styled(Gutter)`grid-row:span 3;`;
const SpanCell = styled(Cell)`grid-row:span 3;`;

const StatusBar = styled.footer`height:20px;flex:none;background:#f0f0f0;display:flex;align-items:flex-end;gap:2px;`;
const StatusCell = styled.div`width:${p => p.$w}px;flex:none;height:15px;border-top:1px solid #9a9a9a;border-left:1px solid #9a9a9a;font-size:${p => p.$size || 11}px;line-height:15px;white-space:nowrap;overflow:hidden;text-align:center;`;
const StatusText = styled.div`width:248px;flex:none;height:20px;line-height:24px;font-size:11px;padding-left:6px;`;

/* ---------- small helpers ---------- */
const In = ({ label, gap, fw, val, drop, lw, size, vs, children }) => (
  <FormRow>
    <Label $w={lw} $gap={gap} $size={size} $lh={size ? 22 : 24}>{label}</Label>
    <Field $w={fw} $size={size ? vs || 13 : undefined} $pad={size && !vs ? 3 : 1}><span>{val}</span>{drop ? <Drop /> : null}</Field>
    {children}
  </FormRow>
);

const filterW = [62, 107, 43, 174, 65, 31, 82, 159, 306];
const FilterStrip = () => <FilterCells>{filterW.map((w, i) => <FilterCell key={i} $w={w} />)}</FilterCells>;

const emptyCells = () => Array.from({ length: 9 }).map((_, i) => <Cell key={i} />);

const tabs = ["Zusatzdaten", "Mitarbeiter", "Vermittler", "VU", "Legitimation", "Status", "VU-KdNr", "VU-Optionen", "Portal", "Visitenkarte"];

const L1 = { lw: 146, gap: 12, fw: 304 };
const L2 = { lw: 200, gap: 9, fw: 226 };
const L3 = { lw: 171, gap: 6, fw: 290 };

export default function App() {
  return (
    <Shell>
      <Global />
      <TitleBar>
        <Ic n="appicon" s={16} />
        <TitleText>Müller Michaela (Person) {"{215}"}</TitleText>
        <WinControls>
          <WinButton><WinGlyph viewBox="0 0 12 12"><path d="M1 6.500h10" /></WinGlyph></WinButton>
          <WinButton><WinGlyph viewBox="0 0 12 12"><path d="M2.500 3.500h6v8h-6zM4.500 3.500V1h6v8h-2" /></WinGlyph></WinButton>
          <WinButton><WinGlyph viewBox="0 0 12 12"><path d="M1 1l10 10M11 1 1 11" /></WinGlyph></WinButton>
        </WinControls>
      </TitleBar>

      <MenuBar>
        <Grip />
        <MenuList>
          {["Datei", "Bearbeiten", "Admin", "OMDS", "Vermittlerprovision", "Wartung", "Daten", "Extras", "Bericht", "DSGVO", "Hilfe"].map(m => <MenuItem key={m}>{m}</MenuItem>)}
        </MenuList>
        <Grip $l={15} $r={3} />
        <ViewBtn $on><Ic n="glass" s={18} /></ViewBtn>
        <ViewBtn><Ic n="cursor" s={16} /></ViewBtn>
        <SearchBox />
        <MenuArrow $l={7} />
        <DoubleArrow viewBox="0 0 12 12"><path d="M1 0h10v2H1zM1 3h10L6 7zM1 7h10l-5 5z" /></DoubleArrow>
        <BandEnd />
      </MenuBar>

      <ToolBar>
        <ToolStrip>
          <Grip $l={5} $r={2} />
          {renderTools(toolSeq)}
          <Grip $l={5} $r={6} />
          <ToolLabel $w={102}>Person</ToolLabel>
          {renderTools(toolSeq2)}
        </ToolStrip>
      </ToolBar>

      <Workspace>
        <Sidebar>
          <SideHead>CCA9-Desktop</SideHead>
          <TreePane>
            <TreeRow>
              <Connector $w={12} />
              <TreeIcon $r={0}><Ic n="person" /></TreeIcon>
              <TreeText $bold $caps $sel>PERSON</TreeText>
            </TreeRow>
            <ChildList>
              {children.map(([ic, t, sel], i) => (
                <TreeRow key={t}>
                  <Connector $w={10} $last={i === children.length - 1} />
                  <TreeIcon $r={1}><Ic n={ic} /></TreeIcon>
                  <TreeText $bold={!!sel} $sel={!!sel}>{t}</TreeText>
                </TreeRow>
              ))}
            </ChildList>
            {roots.map(([ic, t], i) => (
              <TreeRow key={t}>
                <Connector $w={12} $last={i === roots.length - 1} />
                <TreeIcon $r={0}><Ic n={ic} /></TreeIcon>
                <TreeText $bold $caps>{t}</TreeText>
              </TreeRow>
            ))}
          </TreePane>
        </Sidebar>

        <Content>
          <DetailPanel>
            <PanelHead>Person - Detail</PanelHead>
            <FormGrid>
              <FormColumn>
                <In label="Person Nr.:" {...L1} val="P0456054" drop />
                <In label="Anrede:" {...L1} val="Frau" drop />
                <FormRow>
                  <Label $w={146} $gap={12}>Titel:</Label>
                  <Field $w={151}><span /><Drop /></Field>
                  <Field $w={152} $l={1}><span /><Drop /></Field>
                </FormRow>
                <In label="Nachname:" {...L1} val="Müller" />
                <In label="Vorname:" {...L1} val="Michaela" />
                <In label="Berufstitel:" {...L1} val="" drop />
                <In label="Beruf:" {...L1} val="" drop />
                <FormRow>
                  <Spacer $w={24} />
                  <Raised $w={47} $h={20} $m="3px 0 0"><AccessKey>A</AccessKey></Raised>
                  <Raised $w={70} $h={17} $m="4px 0 0 3px">&gt;&gt;</Raised>
                  <CityText>A-1020 Wien</CityText>
                </FormRow>
                <In label="Straße:" {...L1} val="Handelskai 388" />
              </FormColumn>

              <FormColumn>
                <FormRow>
                  <Spacer $w={61} />
                  <Check $m="3px 0 0" />
                  <CheckCaption $w={124}>Kunde seit:</CheckCaption>
                  <Spacer $w={-7} />
                  <Field $w={226}><span /></Field>
                </FormRow>
                <In label="Kundenstatus:" {...L2} val="" drop />
                <In label="Geburtsdatum:" {...L2} val="12.03.1994" />
                <In label="Familienstand:" {...L2} val="ledig" drop />
                <In label="Staatsbürgerschaft:" {...L2} val="A - Österreich" drop />
                <In label="Vollmacht:" {...L2} val="" drop />
                <In label="Vollmacht Datum:" {...L2} val="" />
                <In label="Betreuer:" {...L2} val="" drop>
                  <Raised $w={45} $h={21} $m="1px 0 0 5px">&lt;-<AccessKey>B</AccessKey></Raised>
                </In>
                <In label="Standard-Vermittler:" {...L2} val="" drop>
                  <Raised $w={45} $h={21} $m="1px 0 0 5px">&lt;-<AccessKey>V</AccessKey></Raised>
                </In>
              </FormColumn>

              <FormColumn>
                <In label="Adressanrede:" {...L3} val="Frau Michaela Müller" />
                <In label="Briefanrede:" {...L3} val="Sehr geehrte Frau Müller" />
                <In label="Empfänger Zeile1:" {...L3} val="" />
                <In label="Empfänger Zeile2:" {...L3} val="Frau" />
                <In label="Empfänger Zeile3:" {...L3} val="Michaela Müller" />
                <In label="Matchcode:" lw={171} gap={6} fw={127} val="">
                  <Label $w={63} $gap={7}>HF:</Label>
                  <Field $w={45} />
                  <Field $w={46} $l={3} />
                </In>
                <FormRow>
                  <Label $w={127}>Vorsteuer:</Label>
                  <Check />
                  <Label $w={24} $gap={4}>%:</Label>
                  <Field $w={127} />
                  <Label $w={63} $gap={7}>Sprache:</Label>
                  <Field $w={96}><span>Deutsch</span><Drop /></Field>
                </FormRow>
                <SplitRows>
                  <SplitStack>
                    <In label="UID:" lw={171} gap={6} fw={127} val="" />
                    <FormRow>
                      <Label $w={127} $lh={28}>Aufwand fragen</Label>
                      <Check $m="6px 0 0 7px" />
                      <Label $w={180} $lh={28}>nach HTML Aktensp.:</Label>
                      <Check $m="6px 0 0 7px" />
                    </FormRow>
                  </SplitStack>
                  <BookBtn $w={109} $h={49}>
                    <svg width="34" height="34" viewBox="0 0 34 34">
                      <path d="M2 17 17 8l13 8-15 13z" fill="#fff27a" stroke="#6a5a10" />
                      <path d="M2 17v4l13 12 15-13v-4L15 29z" fill="#e8b440" stroke="#8a2a10" />
                      <path d="M6 16l9-5 5 3-9 6z" fill="#ededed" stroke="#a06a6a" />
                      <path d="M32 2 14 20" stroke="#1030c8" strokeWidth="4" />
                      <path d="M14 20l-3 4 4-2z" fill="#111" />
                    </svg>
                  </BookBtn>
                </SplitRows>
              </FormColumn>
            </FormGrid>

            <HintRow>
              <Label $w={146} $gap={12}>Hinweis:</Label>
              <Field $w={1255} />
            </HintRow>

            <TabBar>
              {tabs.map((t, i) => <Tab key={t} $active={i === 0} $off={t === "VU-Optionen"}>{t}</Tab>)}
            </TabBar>
            <TabFrame>
              <TabInner>
                <TabGrid>
                  <TabColumn>
                    <In size={10.8} label="Soz.vers.:" lw={138} gap={8} fw={298} val="ASVG" drop />
                    <In size={10.8} label="Anzahl Kinder im Haus:" lw={138} gap={8} fw={298} val="" />
                    <In size={10.8} label="Hobby 1:" lw={138} gap={8} fw={298} val="Briefmarken" drop />
                    <In size={10.8} label="Filialen:" lw={138} gap={8} fw={298} val="" />
                  </TabColumn>
                  <TabColumn>
                    <In size={10.8} vs={12.4} label="Soz.vers.nr.:" lw={205} gap={8} fw={222} val="1232120394" />
                    <In size={10.8} label="Erwerbsart:" lw={205} gap={8} fw={222} val="" drop />
                    <In size={10.8} label="Hobby 2:" lw={205} gap={8} fw={222} val="Esoterik" drop />
                    <HonorarRow>Honorarnote<HelpCheck>?</HelpCheck></HonorarRow>
                  </TabColumn>
                  <TabColumn>
                    <In size={10.8} label="Anzahl Kinder:" lw={225} gap={7} fw={257} val="" />
                    <In size={10.8} label="Wohnform:" lw={225} gap={7} fw={257} val="" drop />
                    <In size={10.8} label="Hobby 3:" lw={225} gap={7} fw={257} val="" drop />
                    <In size={10.8} label="?:" lw={225} gap={7} fw={257} val="" />
                  </TabColumn>
                </TabGrid>
                <Scrollbar>
                  <ScrollBtn $h={13} $blue $mb={1} />
                  <ScrollBtn $h={17} />
                  <ScrollBtn $h={13} $down $mt="auto" $mb={1} />
                </Scrollbar>
              </TabInner>
            </TabFrame>
          </DetailPanel>

          <LowerPanel>
            <PanelHead $muted>Adresse zu Person Müller Michaela</PanelHead>
            <FilterRow $t={8}>
              <StarSlot><Ic n="star" /></StarSlot>
              <FilterStrip />
            </FilterRow>
            <GridFrame>
              <DataRow>
                <Gutter />
                {["Land", "Ort", "PLZ", "Straße", "TelefonAr", "Vor", "Vorw.Ort", "Nummer", "Info"].map(h => <HeadCell key={h}>{h}</HeadCell>)}
              </DataRow>
              <DataRow $h={16} $bg="#f59100">
                <Gutter $mark />
                <Cell $c="#fff" $focus>Österreich</Cell>
                <Cell $c="#fff">Wien</Cell>
                <Cell $c="#fff">1020</Cell>
                <Cell $c="#fff">Handelskai 388</Cell>
                <Cell /><Cell /><Cell /><Cell /><Cell />
              </DataRow>
              <DetailBlock>
                <SpanGutter />
                <SpanCell /><SpanCell /><SpanCell /><SpanCell />
                <Cell $bg="#ebebeb">Mail ges.</Cell><Cell $bg="#ebebeb" /><Cell $bg="#ebebeb" /><Cell $bg="#ebebeb">mueller.michaela@outlook.de</Cell><Cell $bg="#fff" />
                <Cell>Mob. ges.</Cell><Cell>+43</Cell><Cell>699</Cell><Cell>14652312</Cell><Cell $bg="#fff" />
                <Cell $bg="#ebebeb">Tel.ges.</Cell><Cell $bg="#ebebeb">+43</Cell><Cell $bg="#ebebeb">1</Cell><Cell $bg="#ebebeb">4568475-45</Cell><Cell $bg="#fff" />
              </DetailBlock>
              {Array.from({ length: 7 }).map((_, i) => (
                <DataRow key={i}><Gutter />{emptyCells()}</DataRow>
              ))}
            </GridFrame>
            <FilterRow $t={9}>
              <StarSlot />
              <FilterStrip />
            </FilterRow>
          </LowerPanel>
        </Content>
      </Workspace>

      <StatusBar>
        <StatusText>sa (sysadmin)</StatusText>
        <StatusCell $w={16} />
        <StatusCell $w={99} />
        <StatusCell $w={15} />
        <StatusCell $w={99} />
        <StatusCell $w={677} />
        <StatusCell $w={57}>Global</StatusCell>
        <StatusCell $w={259} $size={10.6}>CCA9_Konnie_Fachtest_20160223_MB Auf IRIS</StatusCell>
        <StatusCell $w={87}>V 9.6.8/DEV</StatusCell>
        <StatusCell $w={84}>19.04.2018</StatusCell>
      </StatusBar>
    </Shell>
  );
}
